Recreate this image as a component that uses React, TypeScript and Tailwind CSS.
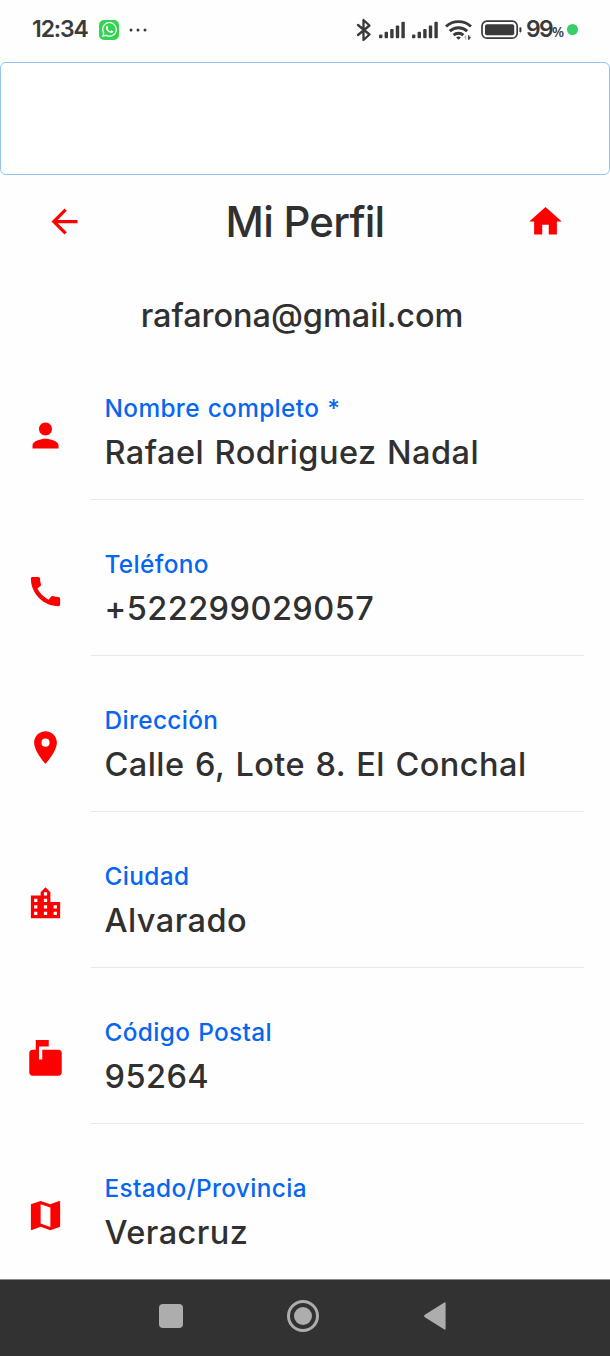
import type { IconType } from 'react-icons';
import { FaWhatsapp } from 'react-icons/fa';
import {
  MdArrowBack,
  MdCall,
  MdHome,
  MdLocationCity,
  MdLocationOn,
  MdMap,
  MdMarkunreadMailbox,
  MdPerson,
} from 'react-icons/md';

interface Field {
  label: string;
  value: string;
  icon: IconType;
}

const fields: Field[] = [
  { label: 'Nombre completo *', value: 'Rafael Rodriguez Nadal', icon: MdPerson },
  { label: 'Teléfono', value: '+522299029057', icon: MdCall },
  { label: 'Dirección', value: 'Calle 6, Lote 8. El Conchal', icon: MdLocationOn },
  { label: 'Ciudad', value: 'Alvarado', icon: MdLocationCity },
  { label: 'Código Postal', value: '95264', icon: MdMarkunreadMailbox },
  { label: 'Estado/Provincia', value: 'Veracruz', icon: MdMap },
];

function Signal() {
  return (
    <svg width="26" height="18" viewBox="0 0 26 18" fill="#3a3a3a">
      <rect x="0" y="13.5" width="3.4" height="3.7" rx="1" />
      <rect x="5.6" y="10.8" width="3.4" height="6.4" rx="1" />
      <rect x="11.2" y="8" width="3.4" height="9.2" rx="1" />
      <rect x="16.8" y="4.5" width="3.4" height="12.7" rx="1" />
      <rect x="22.4" y="0.8" width="3.4" height="16.4" rx="1" />
    </svg>
  );
}

function StatusBar() {
  return (
    <div className="flex h-[62px] shrink-0 items-start pt-[15px] text-[#3a3a3a]">
      <div className="flex h-[29px] items-center pl-[32px]">
        <span className="w-[57px] text-[23px] leading-[29px] font-semibold tracking-[-1.1px]">12:34</span>
        <div className="ml-[10px] flex h-[20px] w-[20px] items-center justify-center rounded-[5px] bg-[#35d354]">
          <FaWhatsapp size={17} color="#fff" />
        </div>
        <svg className="ml-[10px]" width="18" height="4" viewBox="0 0 18 4" fill="#3a3a3a">
          <circle cx="2" cy="2" r="1.5" />
          <circle cx="9" cy="2" r="1.5" />
          <circle cx="16" cy="2" r="1.5" />
        </svg>
      </div>
      <div className="ml-auto flex h-[29px] items-center pr-[32px]">
        <svg width="16" height="24" viewBox="0 0 16 24" fill="none" stroke="#3a3a3a" strokeWidth="2.3" strokeLinejoin="round" strokeLinecap="round">
          <path d="M2 7l11.5 9.5L7.5 22V2l6 5.5L2 17" />
        </svg>
        <div className="ml-[7px] flex gap-[7px]">
          <Signal />
          <Signal />
        </div>
        <svg className="ml-[7px]" width="27" height="20" viewBox="0 0 27 20" fill="none" stroke="#3a3a3a" strokeWidth="2.9">
          <path d="M1 6.5a18.5 18.5 0 0 1 25 0" />
          <path d="M4.8 11.1a12.8 12.8 0 0 1 17.4 0" />
          <path d="M8.6 15.1a7.2 7.2 0 0 1 9.8 0" />
          <path d="M13.5 19.8l-2.4-2.2a3.6 3.6 0 0 1 4.8 0z" fill="#3a3a3a" stroke="none" />
          <path d="M20.7 15.5v4M19.6 17.5l1.1-1.5" stroke="#aaa" strokeWidth="1" />
          <path d="M23.7 15.2v4.6M23.7 19l1.7-2.2" strokeWidth="1.3" />
        </svg>
        <svg className="ml-[8px]" width="42" height="20" viewBox="0 0 42 20">
          <rect x="2" y="1.2" width="35.2" height="17" rx="5" fill="none" stroke="#3a3a3a" strokeWidth="1.7" />
          <rect x="5" y="4.2" width="29.2" height="11" rx="2" fill="#3a3a3a" />
          <rect x="39.4" y="7.2" width="2" height="5.2" rx="0.8" fill="#3a3a3a" />
        </svg>
        <span className="ml-[4px] w-[26px] text-[23px] leading-[29px] font-semibold tracking-[-1.8px]">99</span>
        <span className="mt-[5px] w-[12px] font-['Open_Sans',sans-serif] text-[14px] leading-[20px] font-semibold">%</span>
        <span className="ml-[3px] h-[11px] w-[11px] rounded-full bg-[#35cf68]" />
      </div>
    </div>
  );
}

function FieldRow({ label, value, icon: Icon }: Field) {
  return (
    <div className="flex h-[156px] shrink-0 pr-[26px] pl-[26px]">
      <Icon size={39} color="#ff0000" className="mt-[72px] shrink-0" />
      <div className="ml-[26px] flex-1 border-b border-[#e8e8e8] pt-[49px] pl-[13.5px]">
        <p className="text-[24.4px] leading-[31px] font-medium tracking-[0.35px] whitespace-nowrap text-[#0766f0] [word-spacing:1px]">
          {label}
        </p>
        <p className="mt-[7px] text-[32.5px] leading-[43px] font-medium tracking-[0.45px] whitespace-nowrap text-[#303030] [word-spacing:1.4px]">
          {value}
        </p>
      </div>
    </div>
  );
}

function NavBar() {
  return (
    <nav className="flex h-[77px] shrink-0 items-center border-t border-[#8a8a8a] bg-[#323232] pb-[4px] pl-[159px]">
      <div className="h-[24px] w-[24px] rounded-[4px] bg-[#adadad]" />
      <div className="ml-[104px] flex h-[32px] w-[32px] items-center justify-center rounded-full border-[3px] border-[#adadad]">
        <div className="h-[18px] w-[18px] rounded-full bg-[#adadad]" />
      </div>
      <svg className="ml-[105px]" width="22" height="28" viewBox="0 0 22 28" fill="#adadad">
        <path d="M20.4 0.6q1.2-0.8 1.2 0.8v25.2q0 1.6-1.2 0.8L0.8 15.2q-1.4-1.2 0-2.4z" />
      </svg>
    </nav>
  );
}

export default function App() {
  return (
    <div className="flex h-[1356px] w-[610px] flex-col overflow-hidden bg-[#fefefe] font-['Inter',sans-serif]">
      <StatusBar />
      <div className="h-[113px] shrink-0 rounded-[6px] border-[1.5px] border-[#92c5ee] bg-white" />
      <header className="flex h-[92px] shrink-0 items-center justify-between px-[45px]">
        <MdArrowBack size={39} color="#ff0000" />
        <h1 className="pt-[1px] text-[42px] leading-[50px] font-medium tracking-[-0.75px] text-[#303030]">Mi Perfil</h1>
        <MdHome size={39} color="#ff0000" />
      </header>
      <p className="h-[77px] shrink-0 pt-[29px] pr-[6px] text-center text-[32.5px] leading-[40px] font-medium tracking-[-0.05px] text-[#303030]">
        rafarona@gmail.com
      </p>
      <main className="flex min-h-0 flex-1 flex-col overflow-hidden">
        {fields.map((field) => (
          <FieldRow key={field.label} {...field} />
        ))}
      </main>
      <NavBar />
    </div>
  );
}
